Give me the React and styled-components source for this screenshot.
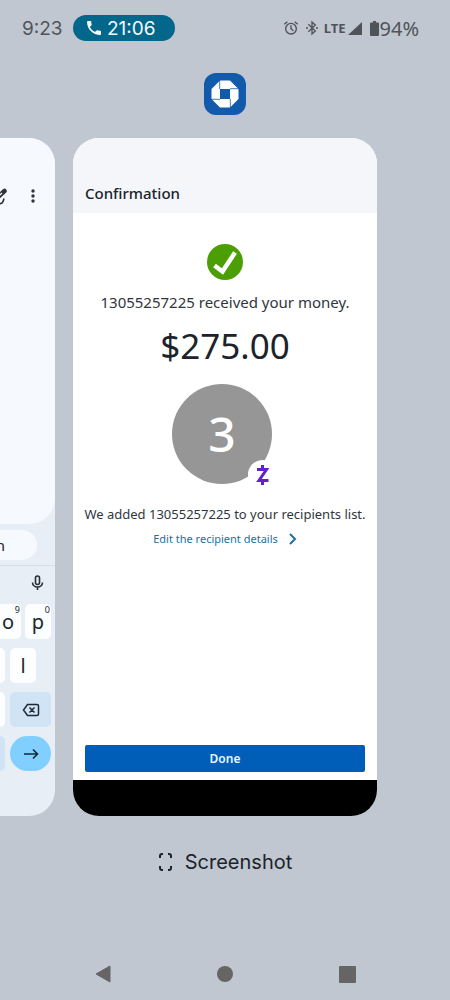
import React from "react";
import styled, { createGlobalStyle } from "styled-components";

const GlobalStyle = createGlobalStyle`
  *, *::before, *::after { box-sizing: border-box; }
  body { margin: 0; background: #c1c7d0; font-family: "Noto Sans", "Open Sans", sans-serif; }
  button { border: 0; margin: 0; padding: 0; background: none; font: inherit; color: inherit; cursor: pointer; }
  h1, p { margin: 0; font-weight: 400; }
  svg { display: block; flex: none; }
`;

const Screen = styled.div`
  display: flex;
  flex-direction: column;
  min-height: 100vh;
  overflow: hidden;
  color: #1c232b;
`;

const StatusBar = styled.header`
  display: flex;
  align-items: center;
  height: 56px;
  padding: 0 31px 0 22px;
  color: #4f545b;
  font-family: Inter, sans-serif;
  font-size: 19px;
`;

const Clock = styled.time`
  width: 51px;
`;

const CallPill = styled.button`
  display: flex;
  align-items: center;
  gap: 6px;
  width: 102px;
  height: 26px;
  padding-left: 14px;
  border-radius: 13px;
  background: #03668b;
  color: #f4fbff;
`;

const StatusIcons = styled.div`
  display: flex;
  align-items: center;
  margin-left: auto;
`;

const BluetoothSlot = styled.span`
  margin-left: 5px;
`;

const Network = styled.span`
  margin: 0 2px 0 4px;
  font-family: "Noto Sans", sans-serif;
  font-size: 13px;
  font-weight: 700;
`;

const BatterySlot = styled.span`
  margin-left: 8px;
`;

const Battery = styled.span`
  margin-left: 1px;
  font-family: "Noto Sans", sans-serif;
  font-size: 20px;
`;

const AppIcon = styled.div`
  display: flex;
  align-items: center;
  justify-content: center;
  align-self: center;
  width: 42px;
  height: 42px;
  margin: 17px 0 23px;
  border-radius: 12px;
  background: #125aab;
`;

const Recents = styled.main`
  display: grid;
  grid-template-columns: 55fr 304fr 55fr;
  gap: 18px;
  flex: 1;
  min-height: 678px;
`;

const PreviousApp = styled.section`
  display: flex;
  flex-direction: column;
  overflow: hidden;
  border-radius: 0 26px 26px 0;
  background: #e7eef6;
`;

const PreviousPage = styled.div`
  display: flex;
  flex: 1;
  align-items: flex-start;
  justify-content: flex-end;
  gap: 18px;
  padding: 50px 14px 0 0;
  border-radius: 0 0 26px 0;
  background: #f6faff;
  color: #30353a;
`;

const SuggestionBar = styled.div`
  display: flex;
  justify-content: flex-end;
  padding: 6px 18px 5px 0;
  border-bottom: 1px solid #d5dde6;
`;

const Suggestion = styled.button`
  flex: none;
  width: 90px;
  height: 30px;
  padding-right: 32px;
  border-radius: 15px;
  background: #f6faff;
  font-size: 15px;
  text-align: right;
`;

const Toolbar = styled.div`
  display: flex;
  align-items: center;
  justify-content: flex-end;
  height: 32px;
  padding-right: 9px;
`;

const Keyboard = styled.div`
  display: flex;
  flex-direction: column;
  gap: 9px;
  padding: 6px 4px 45px 0;
`;

const KeyRow = styled.div`
  display: flex;
  justify-content: flex-end;
  gap: ${(p) => p.$gap || 5}px;
  padding-right: ${(p) => (p.$inset ? 15 : 0)}px;
`;

const Key = styled.button`
  position: relative;
  display: flex;
  flex: none;
  align-items: center;
  justify-content: center;
  width: ${(p) => (p.$wide ? 41 : 26)}px;
  height: 35px;
  border-radius: ${(p) => (p.$round ? 18 : 5)}px;
  background: ${(p) => p.$tone || "#fdfeff"};
  color: #20262c;
  font-size: 20px;
  line-height: 35px;
`;

const Hint = styled.sup`
  position: absolute;
  top: 1px;
  right: 1px;
  font-size: 9px;
  line-height: 10px;
`;

const Card = styled.section`
  display: flex;
  flex-direction: column;
  overflow: hidden;
  border-radius: 26px;
  background: #fff;
`;

const CardHeader = styled.header`
  height: 75px;
  padding: 44px 12px 0;
  background: #f4f6f9;
`;

const Title = styled.h1`
  font-size: 15px;
  font-weight: 500;
  line-height: 22px;
`;

const CardBody = styled.div`
  display: flex;
  flex: 1;
  flex-direction: column;
  align-items: center;
  padding-top: 31px;
  white-space: nowrap;
`;

const Message = styled.p`
  margin-top: ${(p) => p.$gap}px;
  font-size: ${(p) => p.$size}px;
  line-height: 20px;
  color: #30363d;
`;

const Amount = styled.p`
  margin-top: 12px;
  font-size: 35px;
  line-height: 44px;
`;

const Avatar = styled.div`
  position: relative;
  display: flex;
  align-items: center;
  justify-content: center;
  width: 100px;
  height: 100px;
  margin: 16px 6px 0 0;
  border-radius: 50%;
  background: #969696;
  color: #fff;
  font-size: 48px;
  font-weight: 500;
  line-height: 96px;
`;

const ZelleBadge = styled.span`
  position: absolute;
  right: -5px;
  bottom: -5px;
  display: flex;
  align-items: center;
  justify-content: center;
  width: 29px;
  height: 29px;
  border-radius: 50%;
  background: #fff;
`;

const EditLink = styled.a`
  display: flex;
  align-items: center;
  gap: 11px;
  margin-top: 5px;
  color: #23709f;
  font-size: 11px;
  line-height: 20px;
  text-decoration: none;
`;

const CardFooter = styled.footer`
  padding: 0 12px 8px;
`;

const DoneButton = styled.button`
  width: 100%;
  height: 27px;
  border-radius: 2px;
  background: #005eb8;
  color: #e8f6ff;
  font-size: 12px;
  font-weight: 600;
`;

const GestureArea = styled.div`
  height: 36px;
  background: #000;
`;

const ScreenshotButton = styled.button`
  display: flex;
  align-items: center;
  align-self: center;
  gap: 12px;
  height: 32px;
  margin: 30px 0 70px;
  font-family: Inter, sans-serif;
  font-size: 20px;
`;

const NavBar = styled.nav`
  display: grid;
  grid-template-columns: repeat(3, 1fr);
  height: 52px;
  padding: 0 42px;
  color: #656565;
`;

const NavButton = styled.button`
  display: flex;
  align-items: center;
  justify-content: center;
`;

function PhoneIcon() {
  return (
    <svg width="14" height="14" viewBox="3 3 18 18" fill="currentColor">
      <path d="M20 15.500c-1.200 0-2.500-.2-3.600-.6-.3-.1-.7 0-1 .2l-2.200 2.200a15.100 15.100 0 0 1-6.600-6.600l2.200-2.200c.3-.3.4-.7.2-1C8.700 6.500 8.500 5.200 8.500 4c0-.6-.4-1-1-1H4c-.6 0-1 .4-1 1 0 9.400 7.600 17 17 17 .6 0 1-.4 1-1v-3.500c0-.6-.4-1-1-1z" />
    </svg>
  );
}

function AlarmIcon() {
  return (
    <svg width="16" height="16" viewBox="0 0 24 24" fill="none" stroke="currentColor" strokeWidth="2.100">
      <circle cx="12" cy="13" r="8" />
      <path d="M12 8v5l3.500 3M2 6.500 6.500 2.700M22 6.500l-4.500-3.800" />
    </svg>
  );
}

function BluetoothIcon() {
  return (
    <svg width="16" height="16" viewBox="0 0 24 24" fill="none" stroke="currentColor" strokeWidth="2">
      <path d="m6.500 6.500 10.500 10L12 21V3l5 4.500-10.500 10" />
      <path d="M3 12h3M18 12h3" strokeWidth="2.600" />
    </svg>
  );
}

function ChaseLogo() {
  return (
    <svg width="28" height="28" viewBox="0 0 28 28">
      <path
        fill="#fff"
        fillRule="evenodd"
        d="M9 .5h10L27.500 9v10L19 27.500H9L.5 19V9zM9 9v10h10V9z"
      />
      <path d="M8.700 0v9M28 8.700h-9M19.300 28v-9M0 19.300h9" stroke="#125aab" strokeWidth=".8" />
    </svg>
  );
}

function PencilIcon() {
  return (
    <svg width="18" height="18" viewBox="0 0 18 18" fill="none" stroke="currentColor">
      <path d="M4 13.500 15.500 3" strokeWidth="4.500" strokeLinecap="round" />
      <path d="M5 12.500 13 5" stroke="#f6faff" strokeWidth="1.300" />
      <path d="M10.500 15.500q2 .5 3-1t1.500-4" strokeWidth="1.600" />
    </svg>
  );
}

function MoreIcon() {
  return (
    <svg width="16" height="16" viewBox="0 0 16 16" fill="currentColor">
      <circle cx="8" cy="3" r="1.700" />
      <circle cx="8" cy="8" r="1.700" />
      <circle cx="8" cy="13" r="1.700" />
    </svg>
  );
}

function MicIcon() {
  return (
    <svg width="17" height="17" viewBox="0 0 17 17" fill="none" stroke="#25303a" strokeWidth="1.600">
      <rect x="6.500" y="2" width="4" height="8.500" rx="2" />
      <path d="M3.500 8.500a5 4.500 0 0 0 10 0M8.500 13v3" />
    </svg>
  );
}

function BackspaceIcon() {
  return (
    <svg width="18" height="14" viewBox="0 0 18 14" fill="none" stroke="#1d2a35" strokeWidth="1.500">
      <path d="M5.500 1.500H15q1.500 0 1.500 1.500v8q0 1.500-1.500 1.500H5.500L1.500 7zM7.500 4.500l5 5M12.500 4.500l-5 5" />
    </svg>
  );
}

function ArrowIcon() {
  return (
    <svg width="16" height="12" viewBox="0 0 16 12" fill="none" stroke="#12283a" strokeWidth="1.600">
      <path d="M1 6h13.500M10 1.500 14.500 6 10 10.500" />
    </svg>
  );
}

function CheckIcon() {
  return (
    <svg width="36" height="36" viewBox="0 0 36 36">
      <circle cx="18" cy="18" r="18" fill="#4b9f05" />
      <path d="m7.500 21.500 8 6L28 8.500" fill="none" stroke="#fff" strokeWidth="4.500" />
    </svg>
  );
}

function ZelleLogo() {
  return (
    <svg width="13" height="22" viewBox="0 0 13 22" fill="none" stroke="#6420ca" strokeWidth="3">
      <path d="M1 5.500h9.500L3 16.500h9.500M6.500 1v4M6.500 17v4" />
    </svg>
  );
}

export default function App() {
  return (
    <Screen>
      <GlobalStyle />
      <StatusBar>
        <Clock>9:23</Clock>
        <CallPill>
          <PhoneIcon />
          21:06
        </CallPill>
        <StatusIcons>
          <AlarmIcon />
          <BluetoothSlot>
            <BluetoothIcon />
          </BluetoothSlot>
          <Network>LTE</Network>
          <svg width="14" height="13" fill="currentColor">
            <path d="M14 0v13H0z" />
          </svg>
          <BatterySlot>
            <svg width="9" height="15" fill="currentColor">
              <path d="M3 0h3v1.500h2q1 0 1 1V14q0 1-1 1H1q-1 0-1-1V2.500q0-1 1-1h2z" />
            </svg>
          </BatterySlot>
          <Battery>94%</Battery>
        </StatusIcons>
      </StatusBar>

      <AppIcon>
        <ChaseLogo />
      </AppIcon>

      <Recents>
        <PreviousApp>
          <PreviousPage>
            <PencilIcon />
            <MoreIcon />
          </PreviousPage>
          <SuggestionBar>
            <Suggestion>n</Suggestion>
          </SuggestionBar>
          <Toolbar>
            <MicIcon />
          </Toolbar>
          <Keyboard>
            <KeyRow $gap={4}>
              <Key>
                o<Hint>9</Hint>
              </Key>
              <Key>
                p<Hint>0</Hint>
              </Key>
            </KeyRow>
            <KeyRow $inset>
              <Key aria-label="k" />
              <Key>l</Key>
            </KeyRow>
            <KeyRow>
              <Key aria-label="m" />
              <Key $wide $tone="#d1e4f5" aria-label="Backspace">
                <BackspaceIcon />
              </Key>
            </KeyRow>
            <KeyRow>
              <Key $tone="#d1e4f5" aria-label="Period" />
              <Key $wide $round $tone="#80cfff" aria-label="Enter">
                <ArrowIcon />
              </Key>
            </KeyRow>
          </Keyboard>
        </PreviousApp>

        <Card>
          <CardHeader>
            <Title>Confirmation</Title>
          </CardHeader>
          <CardBody>
            <CheckIcon />
            <Message $gap={12} $size={15}>13055257225 received your money.</Message>
            <Amount>$275.00</Amount>
            <Avatar>
              3
              <ZelleBadge>
                <ZelleLogo />
              </ZelleBadge>
            </Avatar>
            <Message $gap={20} $size={13}>We added 13055257225 to your recipients list.</Message>
            <EditLink href="#recipient">
              Edit the recipient details
              <svg width="8" height="12" fill="none" stroke="currentColor" strokeWidth="2">
                <path d="m1 1 5 5-5 5" />
              </svg>
            </EditLink>
          </CardBody>
          <CardFooter>
            <DoneButton>Done</DoneButton>
          </CardFooter>
          <GestureArea />
        </Card>
      </Recents>

      <ScreenshotButton>
        <svg width="15" height="20" fill="none" stroke="currentColor" strokeWidth="2">
          <path d="M2 6V4q0-2 2-2h1M10 2h1q2 0 2 2v2M13 14v2q0 2-2 2h-1M5 18H4q-2 0-2-2v-2" />
        </svg>
        Screenshot
      </ScreenshotButton>

      <NavBar>
        <NavButton aria-label="Back">
          <svg width="16" height="18" fill="currentColor">
            <path d="M15 1v16L1 9z" stroke="currentColor" strokeLinejoin="round" />
          </svg>
        </NavButton>
        <NavButton aria-label="Home">
          <svg width="16" height="16" fill="currentColor">
            <circle cx="8" cy="8" r="8" />
          </svg>
        </NavButton>
        <NavButton aria-label="Recent apps">
          <svg width="17" height="17" fill="currentColor">
            <rect width="17" height="17" rx="1" />
          </svg>
        </NavButton>
      </NavBar>
    </Screen>
  );
}
